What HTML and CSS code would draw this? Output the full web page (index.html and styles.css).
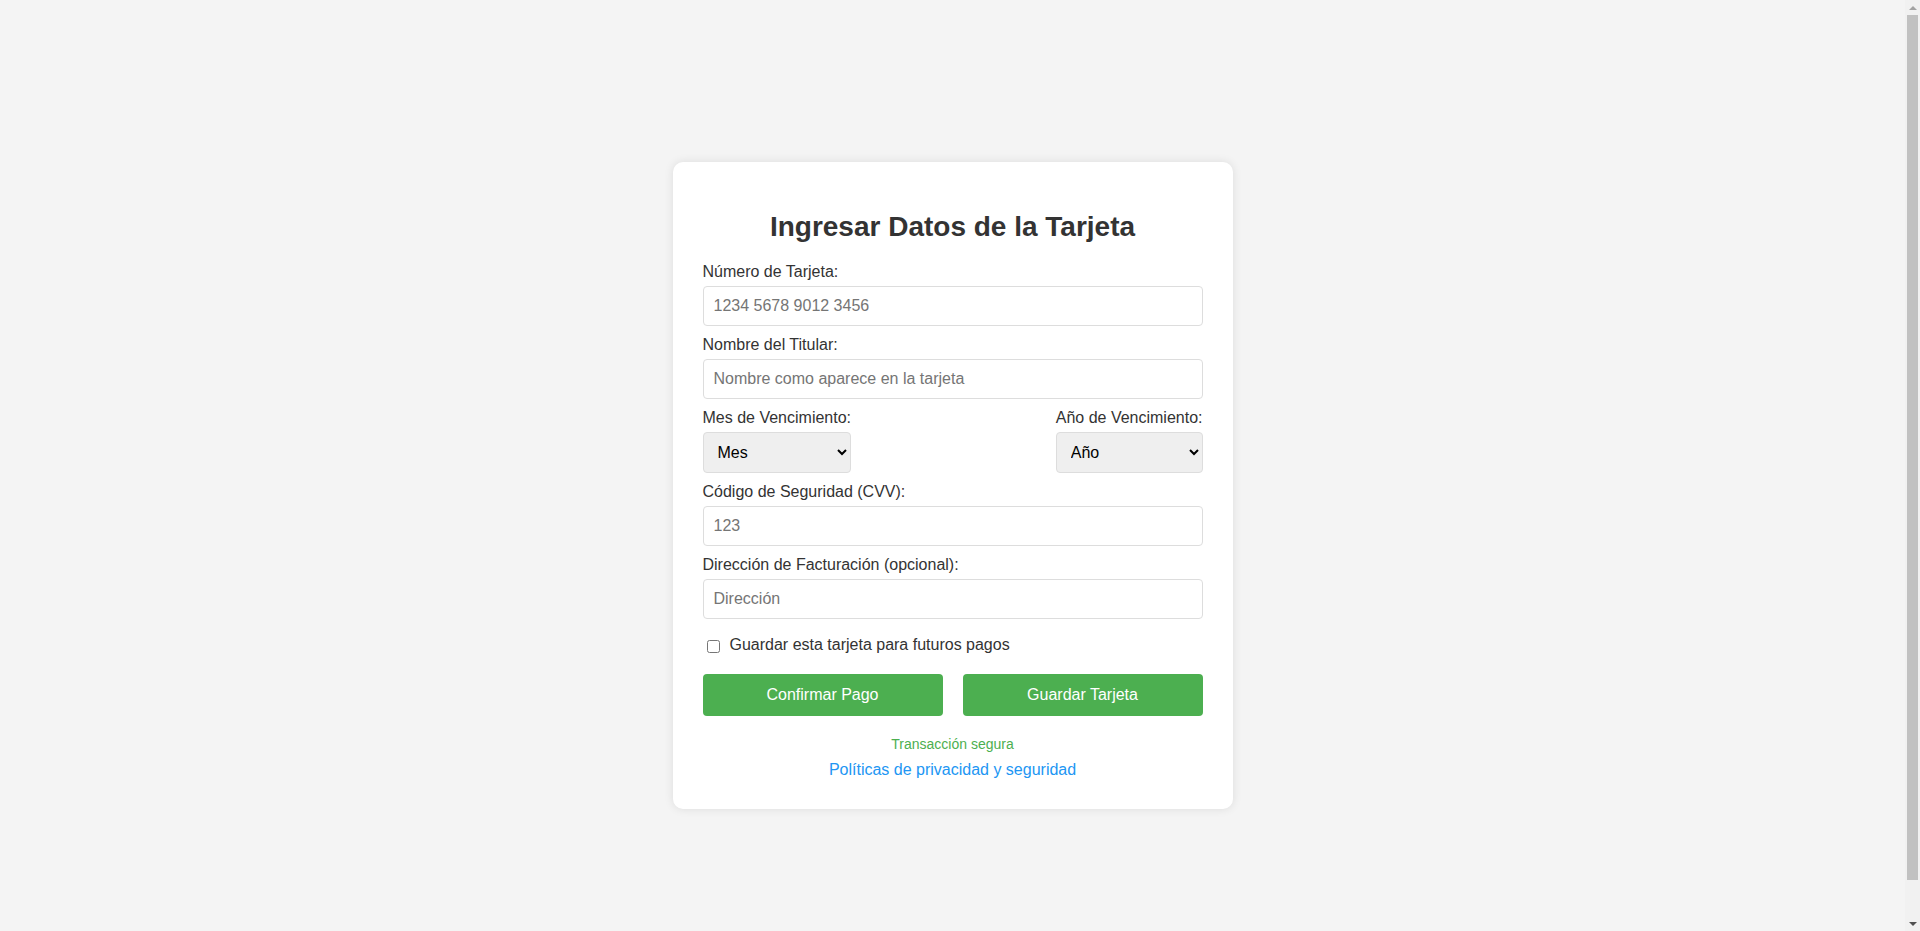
FILE: index.html
```html
<!DOCTYPE html>
<html lang="es">
<head>
<meta charset="UTF-8">
<title>Ingresar Datos de la Tarjeta</title>
<link rel="stylesheet" href="styles.css">
</head>
<body>
<div class="card">
  <h2 class="title">Ingresar Datos de la Tarjeta</h2>
  <form class="form">
    <label class="label" for="num">Número de Tarjeta:</label>
    <input class="field" id="num" type="text" placeholder="1234 5678 9012 3456">

    <label class="label" for="name">Nombre del Titular:</label>
    <input class="field" id="name" type="text" placeholder="Nombre como aparece en la tarjeta">

    <div class="expiry">
      <div class="expiry-item">
        <label class="label" for="mes">Mes de Vencimiento:</label>
        <select class="select" id="mes">
          <option>Mes</option>
          <option>01</option>
          <option>02</option>
          <option>03</option>
          <option>04</option>
          <option>05</option>
          <option>06</option>
          <option>07</option>
          <option>08</option>
          <option>09</option>
          <option>10</option>
          <option>11</option>
          <option>12</option>
        </select>
      </div>
      <div class="expiry-item">
        <label class="label" for="anio">Año de Vencimiento:</label>
        <select class="select" id="anio">
          <option>Año</option>
          <option>2024</option>
          <option>2025</option>
          <option>2026</option>
          <option>2027</option>
          <option>2028</option>
        </select>
      </div>
    </div>

    <label class="label" for="cvv">Código de Seguridad (CVV):</label>
    <input class="field" id="cvv" type="text" placeholder="123">

    <label class="label" for="dir">Dirección de Facturación (opcional):</label>
    <input class="field" id="dir" type="text" placeholder="Dirección">

    <div class="check-row">
      <input class="check" id="save" type="checkbox">
      <label class="check-label" for="save">Guardar esta tarjeta para futuros pagos</label>
    </div>

    <div class="actions">
      <button class="btn" type="button">Confirmar Pago</button>
      <button class="btn" type="button">Guardar Tarjeta</button>
    </div>
  </form>
  <p class="secure">Transacción segura</p>
  <a class="policy" href="#">Políticas de privacidad y seguridad</a>
</div>

<div class="scrollbar" aria-hidden="true">
  <div class="sb-btn"><span class="sb-up"></span></div>
  <div class="sb-track"><div class="sb-thumb"></div></div>
  <div class="sb-btn"><span class="sb-down"></span></div>
</div>
</body>
</html>
```

FILE: styles.css
```css
html {
  margin: 0;
}

body {
  margin: 0;
  padding: 20px 35px 20px 20px;
  box-sizing: border-box;
  height: 971px;
  overflow: hidden;
  background: #f4f4f4;
  font-family: "Liberation Sans", Arial, sans-serif;
  font-size: 16px;
  color: #333;
  display: flex;
  justify-content: center;
  align-items: center;
}

.card {
  background: #fff;
  width: 100%;
  max-width: 500px;
  padding: 30px;
  border-radius: 10px;
  box-shadow: 0 0 10px rgba(0, 0, 0, 0.1);
}

.title {
  font-size: 28px;
  font-weight: bold;
  text-align: center;
  color: #333;
  margin: 19px 0 20px;
}

.form {
  margin: 0;
}

.label {
  display: block;
  margin-bottom: 5px;
  color: #333;
}

.field {
  display: block;
  width: 100%;
  box-sizing: border-box;
  padding: 10px;
  margin: 0 0 10px;
  border: 1px solid #ddd;
  border-radius: 4px;
  font-family: "Liberation Sans", Arial, sans-serif;
  font-size: 16px;
  color: #333;
}

.field::placeholder {
  color: #757575;
}

.expiry {
  display: flex;
  justify-content: space-between;
}

.select {
  display: block;
  width: 100%;
  box-sizing: border-box;
  padding: 10px;
  margin: 0 0 10px;
  border: 1px solid #ddd;
  border-radius: 4px;
  background-color: #efefef;
  font-family: "Liberation Sans", Arial, sans-serif;
  font-size: 16px;
  color: #000;
}

.check-row {
  display: flex;
  align-items: flex-start;
  margin: 17px 0 18px;
}

.check {
  width: 13px;
  height: 13px;
  margin: 4px 10px 3px 4px;
}

.check-label {
  color: #333;
}

.actions {
  display: flex;
  gap: 20px;
}

.btn {
  flex: 1;
  padding: 12px;
  border: none;
  border-radius: 4px;
  background: #4caf50;
  color: #fff;
  font-family: "Liberation Sans", Arial, sans-serif;
  font-size: 16px;
  cursor: pointer;
}

.secure {
  margin: 20px 0 9px;
  text-align: center;
  font-size: 14px;
  color: #4caf50;
}

.policy {
  display: block;
  text-align: center;
  color: #2196f3;
  text-decoration: none;
}

/* browser scrollbar */
.scrollbar {
  position: fixed;
  top: 0;
  right: 0;
  width: 15px;
  height: 100vh;
  background: #f1f1f1;
  display: flex;
  flex-direction: column;
}

.sb-btn {
  height: 15px;
  flex: 0 0 15px;
  display: flex;
  align-items: center;
  justify-content: center;
}

.sb-up {
  width: 0;
  height: 0;
  border-left: 4px solid transparent;
  border-right: 4px solid transparent;
  border-bottom: 4px solid #a3a3a3;
}

.sb-down {
  width: 0;
  height: 0;
  border-left: 4px solid transparent;
  border-right: 4px solid transparent;
  border-top: 4px solid #505050;
}

.sb-track {
  flex: 1;
  padding: 0 2px;
}

.sb-thumb {
  height: 96%;
  background: #c1c1c1;
}
```
